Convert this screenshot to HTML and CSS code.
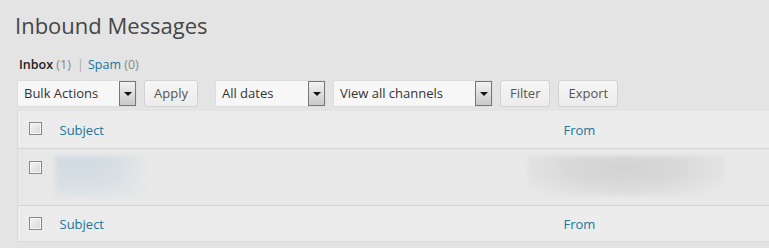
FILE: index.html
```html
<!DOCTYPE html>
<html lang="en">
<head>
    <meta charset="UTF-8">
    <title>Inbound Messages</title>
    <link rel="stylesheet" href="styles.css">
</head>
<body>

<div class="wrap">
    <h1>Inbound Messages</h1>

    <ul class="subsubsub">
        <li><b>Inbox</b> <span class="count">(1)</span> <span class="sep">|</span></li>
        <li><a href="#">Spam</a> <span class="count">(0)</span></li>
    </ul>

    <div class="tablenav">
        <div class="select w-bulk"><span>Bulk Actions</span><i class="arrow"></i></div>
        <button class="button">Apply</button>
        <div class="select w-dates"><span>All dates</span><i class="arrow"></i></div>
        <div class="select w-channels"><span>View all channels</span><i class="arrow"></i></div>
        <button class="button">Filter</button>
        <button class="button">Export</button>
    </div>

    <table class="list">
        <thead>
        <tr>
            <td class="check"><span class="box"></span></td>
            <th class="subject"><a href="#">Subject</a></th>
            <th class="from"><a href="#">From</a></th>
        </tr>
        </thead>
        <tbody>
        <tr>
            <td class="check"><span class="box"></span></td>
            <td class="subject"><div class="blur blur-blue"></div></td>
            <td class="from"><div class="blur blur-gray"></div></td>
        </tr>
        </tbody>
        <tfoot>
        <tr>
            <td class="check"><span class="box"></span></td>
            <th class="subject"><a href="#">Subject</a></th>
            <th class="from"><a href="#">From</a></th>
        </tr>
        </tfoot>
    </table>
</div>

</body>
</html>
```

FILE: styles.css
```css
body {
    margin: 0;
    background: #e4e4e4;
    font-family: "Open Sans", "Segoe UI", sans-serif;
    font-size: 13px;
    color: #333;
    overflow: hidden;
}

.wrap {
    padding: 0 0 0 17px;
}

h1 {
    margin: 0 0 0 -2px;
    padding: 11px 0 0;
    font-size: 22px;
    font-weight: 400;
    line-height: 29px;
    color: #464646;
}

a {
    color: #21759b;
    text-decoration: none;
}

.subsubsub {
    list-style: none;
    margin: 0;
    padding: 16px 0 0 2px;
    display: flex;
    gap: 4px;
    font-size: 12.5px;
    line-height: 18px;
    color: #666;

    b {
        color: #222;
        font-weight: 600;
    }

    .count {
        color: #888;
    }

    .sep {
        color: #aaa;
        margin: 0 0 0 3px;
    }
}

.tablenav {
    display: flex;
    align-items: center;
    height: 28px;
    margin-top: 5px;
}

.select {
    box-sizing: border-box;
    height: 27px;
    display: flex;
    align-items: center;
    justify-content: space-between;
    background: #f7f7f7;
    border: 1px solid #ddd;
    border-radius: 2px;
    padding: 0 0 0 6px;
    color: #333;
    font-size: 13px;

    .arrow {
        box-sizing: border-box;
        width: 17px;
        height: 25px;
        border: 1px solid #777;
        background: linear-gradient(#f2f2f2, #c9c9c9);
        position: relative;
    }

    .arrow::after {
        content: "";
        position: absolute;
        left: 4px;
        top: 10px;
        border-left: 4px solid transparent;
        border-right: 4px solid transparent;
        border-top: 4px solid #111;
    }
}

.w-bulk {
    width: 120px;
    margin-right: 7px;
}

.w-dates {
    width: 111px;
    margin-left: 9px;
    margin-right: 7px;
}

.w-channels {
    width: 160px;
    margin-right: 7px;
}

.button {
    box-sizing: border-box;
    height: 27px;
    padding: 0 9px;
    margin-right: 8px;
    border: 1px solid #d2d2d2;
    border-radius: 3px;
    background: linear-gradient(#f6f6f6, #ececec);
    font-family: inherit;
    font-size: 13px;
    color: #555;
}

.list {
    width: 100%;
    margin-top: 4px;
    border-collapse: collapse;
    background: #ececec;
    border-left: 1px solid #dadada;

    td, th {
        padding: 0;
        text-align: left;
        font-weight: 400;
        vertical-align: top;
    }

    thead tr {
        height: 37px;
        border-bottom: 1px solid #d4d4d4;
    }

    tbody tr {
        height: 57px;
        background: #e8e8e8;
        border-bottom: 1px solid #d4d4d4;
    }

    tfoot tr {
        height: 36px;
        border-bottom: 1px solid #dadada;
    }

    thead th, tfoot th {
        vertical-align: middle;
        font-size: 13px;
        padding-top: 1px;
    }

    .check {
        width: 36px;
        padding: 11px 0 0 11px;
        box-sizing: border-box;
    }

    tbody .check {
        padding-top: 12px;
    }

    .subject {
        width: 504px;
        padding-left: 6px;
    }

    .from {
        padding-left: 0;
    }
}

.box {
    display: block;
    box-sizing: border-box;
    width: 13px;
    height: 13px;
    border: 1px solid #888;
    background: linear-gradient(135deg, #f4f4f4, #d8d8d8);
    box-shadow: inset 0 0 0 1px #f8f8f8;
}

.blur {
    height: 40px;
    margin-top: 7px;
    filter: blur(1.5px);
}

.blur-blue {
    width: 100px;
    margin-left: -5px;
    background:
        linear-gradient(to right, rgba(232, 232, 232, 0) 65%, #e8e8e8 100%),
        radial-gradient(ellipse 80px 36px at 24px 8px, #d0dae1, #d9e0e5 60%, #e1e5e7 100%);
}

.blur-gray {
    width: 196px;
    margin-left: -36px;
    background: radial-gradient(ellipse 120px 36px at 96px 12px, #d2d2d2, #d9d9d9 50%, rgba(232, 232, 232, 0) 100%);
}
```
